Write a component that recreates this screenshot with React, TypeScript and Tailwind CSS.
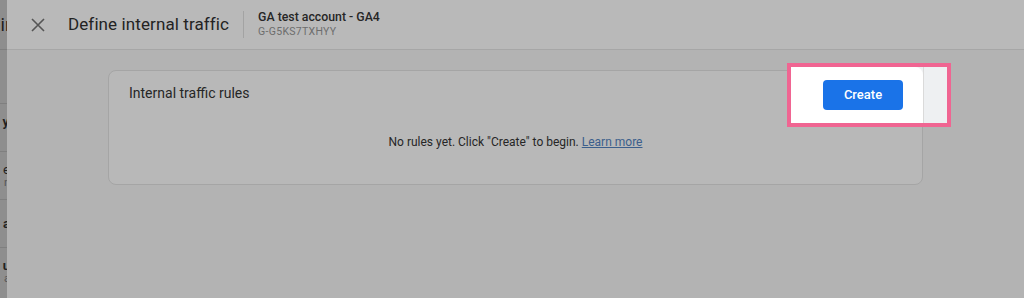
import React from "react";

export default function App() {
  return (
    <div
      className="w-[1024px] h-[298px] flex overflow-hidden bg-[#b3b3b3]"
      style={{ fontFamily: "Roboto, 'Liberation Sans', sans-serif" }}
    >
      {/* underlying page strip */}
      <div className="w-[7px] h-full bg-[#8e8e8e] overflow-hidden relative shrink-0 flex flex-col">
        <div className="h-[50px] shrink-0 flex items-center justify-end border-b border-[#7f7f7f]">
          <span className="text-[18px] text-[#202020] leading-none -mr-[4px]">ir</span>
        </div>
        <div className="h-[54px] shrink-0 border-b border-[#7f7f7f]" />
        <div className="h-[48px] shrink-0 flex flex-col justify-center items-end border-b border-[#7f7f7f]">
          <span className="text-[13px] font-bold text-[#222] leading-[14px] -mr-[2px]">y</span>
          <span className="text-[11px] text-[#555] leading-[12px] -mr-[3px]">i</span>
        </div>
        <div className="h-[48px] shrink-0 flex flex-col justify-center items-end border-b border-[#7f7f7f]">
          <span className="text-[13px] text-[#222] leading-[14px] -mr-[3px]">e</span>
          <span className="text-[11px] text-[#555] leading-[12px] -mr-[3px]">n</span>
        </div>
        <div className="h-[48px] shrink-0 flex flex-col justify-center items-end border-b border-[#7f7f7f]">
          <span className="text-[13px] font-bold text-[#222] leading-[14px] -mr-[3px]">a</span>
        </div>
        <div className="h-[48px] shrink-0 flex flex-col justify-center items-end">
          <span className="text-[13px] font-bold text-[#222] leading-[14px] -mr-[3px]">u</span>
          <span className="text-[11px] text-[#555] leading-[12px] -mr-[3px]">a</span>
        </div>
      </div>
      <div className="flex-1 flex flex-col shadow-[-2px_0_4px_rgba(0,0,0,0.25)]">
        {/* header */}
        <div className="h-[50px] shrink-0 bg-[#b9b9b9] border-b border-[#a6a6a6] flex items-center">
          <div className="w-[61px] flex justify-center pl-[1px]">
            <svg width="16" height="16" viewBox="0 0 16 16">
              <path d="M2 2 L14 14 M14 2 L2 14" stroke="#555" strokeWidth="1.6" />
            </svg>
          </div>
          <div className="text-[17px] text-[#232323] tracking-[0.1px]">Define internal traffic</div>
          <div className="ml-[14px] w-px h-[27px] bg-[#a3a3a3]" />
          <div className="ml-[14px] flex flex-col pb-[2px]">
            <div className="text-[12.3px] font-medium text-[#262626] leading-[16px]">GA test account - GA4</div>
            <div className="text-[10.5px] text-[#6d6d6d] leading-[14px] tracking-[0.3px]">G-G5KS7TXHYY</div>
          </div>
        </div>
        {/* body */}
        <div className="flex-1 pl-[101px] pt-[20px]">
          <div className="relative w-[815px] h-[115px] rounded-[8px] border border-[#a5a5a5] bg-[#b8b8b8] flex flex-col">
            <div className="flex items-center justify-between pl-[20px] pr-[19px] pt-[4px]">
              <div className="text-[14px] text-[#262626] pt-[7px]">Internal traffic rules</div>
              <div className="w-[80px] h-[30px]" />
            </div>
            <div className="mt-[28px] text-center text-[12px] text-[#262626]">
              No rules yet. Click "Create" to begin.{" "}
              <span className="text-[#3c5f8c] underline">Learn more</span>
            </div>
            {/* highlight */}
            <div className="absolute left-[678px] top-[-8px] w-[164px] h-[64px] border-[4px] border-[#f06592] bg-[#eef0f2] flex">
              <div className="w-[132px] h-full bg-white rounded-tr-[8px] flex items-start justify-end pr-[20px] pt-[13px]">
                <div className="w-[80px] h-[30px] rounded-[4px] bg-[#1a73e8] text-white text-[13px] font-medium flex items-center justify-center">
                  Create
                </div>
              </div>
              <div className="flex-1 border-l border-[#dadada]" />
            </div>
          </div>
        </div>
      </div>
    </div>
  );
}
